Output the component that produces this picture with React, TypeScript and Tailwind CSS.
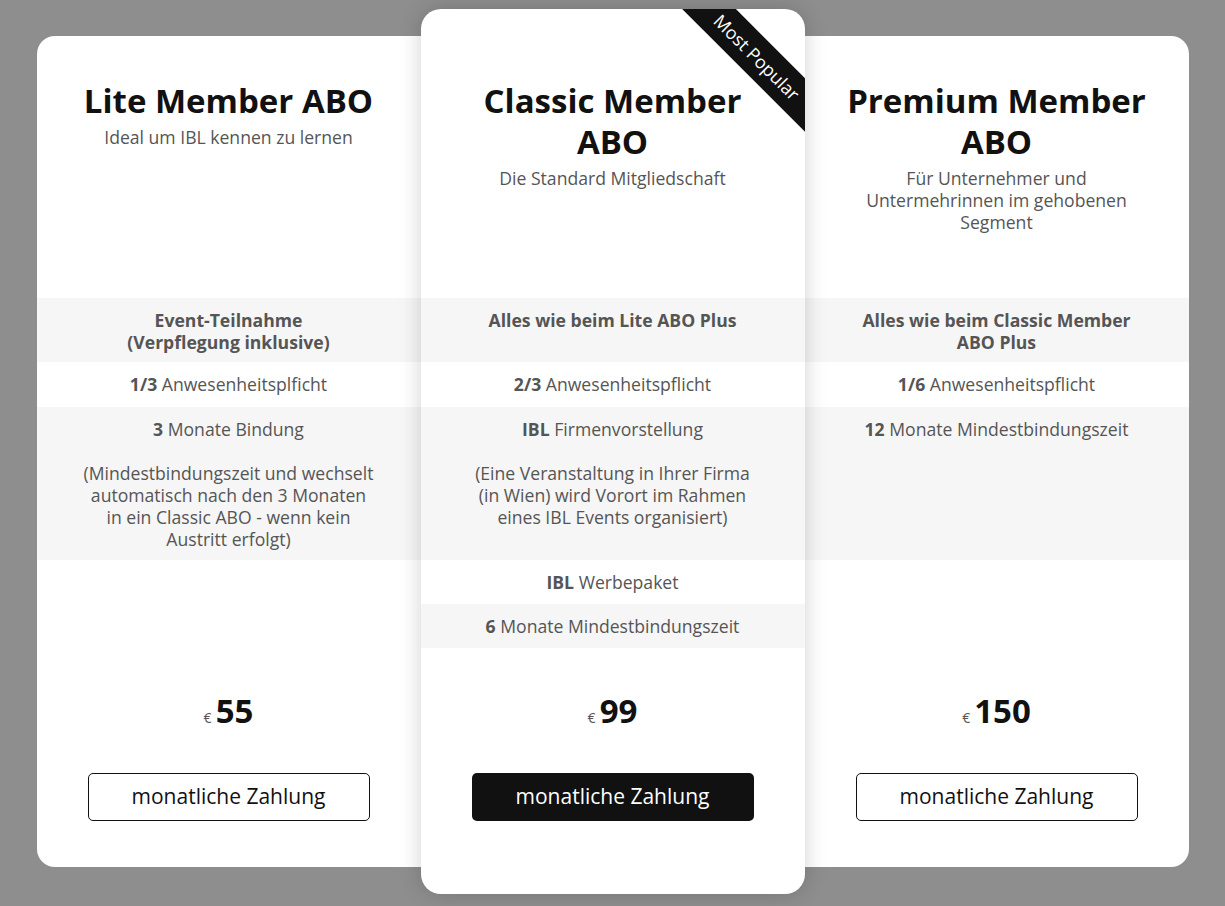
import React from "react"

type Plan = {
    title: React.ReactNode
    subtitle: React.ReactNode
    rows: React.ReactNode[]
    price: string
    popular?: boolean
}

const rowHeights = ["h-[64px]", "h-[45px]", "h-[153px]", "h-[44px]", "h-[44px]"]

const plans: Plan[] = [
    {
        title: "Lite Member ABO",
        subtitle: "Ideal um IBL kennen zu lernen",
        rows: [
            <b>Event-Teilnahme<br />(Verpflegung inklusive)</b>,
            <><b>1/3</b> Anwesenheitsplficht</>,
            <><b>3</b> Monate Bindung<br /><br />(Mindestbindungszeit und wechselt<br />automatisch nach den 3 Monaten<br />in ein Classic ABO - wenn kein<br />Austritt erfolgt)</>,
        ],
        price: "55",
    },
    {
        title: <>Classic Member<br />ABO</>,
        subtitle: "Die Standard Mitgliedschaft",
        rows: [
            <b>Alles wie beim Lite ABO Plus</b>,
            <><b>2/3</b> Anwesenheitspflicht</>,
            <><b>IBL</b> Firmenvorstellung<br /><br />(Eine Veranstaltung in Ihrer Firma<br />(in Wien) wird Vorort im Rahmen<br />eines IBL Events organisiert)</>,
            <><b>IBL</b> Werbepaket</>,
            <><b>6</b> Monate Mindestbindungszeit</>,
        ],
        price: "99",
        popular: true,
    },
    {
        title: <>Premium Member<br />ABO</>,
        subtitle: <>Für Unternehmer und<br />Untermehrinnen im gehobenen<br />Segment</>,
        rows: [
            <b>Alles wie beim Classic Member<br />ABO Plus</b>,
            <><b>1/6</b> Anwesenheitspflicht</>,
            <><b>12</b> Monate Mindestbindungszeit</>,
        ],
        price: "150",
    },
]

const Card = ({ plan, index }: { plan: Plan; index: number }) => {
    const shape =
        index === 0
            ? "rounded-l-[18px]"
            : index === 2
                ? "rounded-r-[18px]"
                : "relative z-10 rounded-[20px] py-[27px] shadow-[0_0_22px_rgba(0,0,0,0.18)] overflow-hidden"

    return (
        <div className={`w-[384px] bg-white flex flex-col ${shape}`}>
            {plan.popular && (
                <div className="absolute left-[236px] top-[29px] w-[200px] h-[38px] rotate-45 bg-[#111111] text-white text-[18px] leading-[38px] text-center">
                    Most Popular
                </div>
            )}

            <div className="h-[262px] pt-[44px] px-[20px] text-center">
                <h2 className="text-[33px] leading-[41px] font-bold text-[#111111]">{plan.title}</h2>
                <p className="mt-[5px] text-[17.6px] leading-[22px] text-[#555555]">{plan.subtitle}</p>
            </div>

            <div className="h-[393px] flex flex-col">
                {plan.rows.map((row, i) => (
                    <div
                        key={i}
                        className={`${rowHeights[i]} pt-[11px] text-center text-[17.6px] leading-[22px] text-[#555555] ${i % 2 === 0 ? "bg-[#f6f6f6]" : "bg-white"}`}
                    >
                        {row}
                    </div>
                ))}
            </div>

            <div className="h-[40px] flex items-baseline justify-center gap-[4px]">
                <span className="text-[14px] text-[#555555]">€</span>
                <span className="text-[33px] leading-[40px] font-bold text-[#111111]">{plan.price}</span>
            </div>

            <div className="mt-[42px] mb-[46px] px-[51px]">
                <button
                    className={`w-full h-[48px] rounded-[5px] text-[21px] ${plan.popular ? "bg-[#111111] text-white" : "border border-[#111111] text-[#111111] bg-white"}`}
                >
                    monatliche Zahlung
                </button>
            </div>
        </div>
    )
}

const App = () => {
    return (
        <div className="min-h-screen bg-[#8e8e8e] pt-[9px] font-['Open_Sans',sans-serif]">
            <div className="flex items-center justify-center">
                {plans.map((plan, i) => (
                    <Card key={i} plan={plan} index={i} />
                ))}
            </div>
        </div>
    )
}

export default App
